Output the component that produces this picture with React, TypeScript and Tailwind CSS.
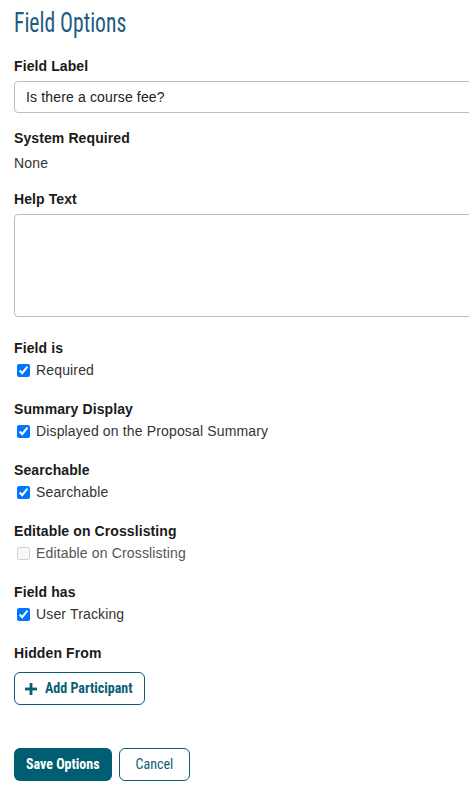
type CheckRow = {
  title: string;
  label: string;
  checked: boolean;
  disabled?: boolean;
};

const checkSections: CheckRow[] = [
  { title: "Field is", label: "Required", checked: true },
  { title: "Summary Display", label: "Displayed on the Proposal Summary", checked: true },
  { title: "Searchable", label: "Searchable", checked: true },
  { title: "Editable on Crosslisting", label: "Editable on Crosslisting", checked: false, disabled: true },
  { title: "Field has", label: "User Tracking", checked: true },
];

const condensed = "font-['Roboto_Condensed',Roboto,sans-serif]";

function Label({ children }: { children: React.ReactNode }) {
  return <div className="text-[14px] leading-4 font-bold tracking-[0.1px] text-[#1a1a1a]">{children}</div>;
}

export default function App() {
  return (
    <div className="w-[469px] min-h-[800px] overflow-hidden bg-white font-['Liberation_Sans',Arial,sans-serif] text-[#222]">
      <div className="pl-[14px] pt-[6px]">
        {/* Heading - condensed look */}
        <h1 className={`${condensed} inline-block origin-left scale-x-[0.8] text-[27px] leading-[34px] text-[#1e5b7e]`}>
          Field Options
        </h1>

        <div className="mt-[18px]">
          <Label>Field Label</Label>
          <input
            type="text"
            defaultValue="Is there a course fee?"
            className="mt-[7px] block h-[32px] w-[480px] rounded-[4px] border border-[#bdbdbd] px-[11px] text-[14px] tracking-[0.15px] text-[#222] outline-none"
          />
        </div>

        <div className="mt-[17px]">
          <Label>System Required</Label>
          <div className="mt-[9px] text-[14px] leading-4 tracking-[0.15px] text-[#333]">None</div>
        </div>

        <div className="mt-[20px]">
          <Label>Help Text</Label>
          <textarea className="mt-[7px] block h-[103px] w-[480px] resize-none rounded-[4px] border border-[#bdbdbd] outline-none" />
        </div>

        <div className="mt-[23px] flex flex-col gap-[23px]">
          {checkSections.map((s) => (
            <div key={s.title}>
              <Label>{s.title}</Label>
              <label className="mt-[6px] flex h-4 items-center text-[14px] leading-4 tracking-[0.15px] text-[#333]">
                <input
                  type="checkbox"
                  defaultChecked={s.checked}
                  disabled={s.disabled}
                  className="ml-[3px] mr-[6px] h-[13px] w-[13px]"
                />
                <span className={s.disabled ? "text-[#555]" : ""}>{s.label}</span>
              </label>
            </div>
          ))}
        </div>

        <div className="mt-[23px]">
          <Label>Hidden From</Label>
          <button
            className={`${condensed} mt-[11px] flex h-[33px] items-center gap-[8px] rounded-[6px] border border-[#0b5e73] bg-white pl-[10px] pr-[12px] text-[14px] font-bold text-[#0b5e73]`}
          >
            <svg width="12" height="12" viewBox="0 0 12 12" aria-hidden="true">
              <rect x="4.6" y="0" width="2.8" height="12" fill="currentColor" />
              <rect x="0" y="4.6" width="12" height="2.8" fill="currentColor" />
            </svg>
            Add Participant
          </button>
        </div>

        <div className="mt-[43px] flex gap-[7px]">
          <button
            className={`${condensed} h-[33px] rounded-[6px] bg-[#005e73] px-[12px] text-[14px] font-bold text-white`}
          >
            Save Options
          </button>
          <button
            className={`${condensed} h-[33px] rounded-[6px] border border-[#0b5e73] bg-white px-[16px] text-[14px] text-[#0b5e73]`}
          >
            Cancel
          </button>
        </div>
      </div>
    </div>
  );
}
